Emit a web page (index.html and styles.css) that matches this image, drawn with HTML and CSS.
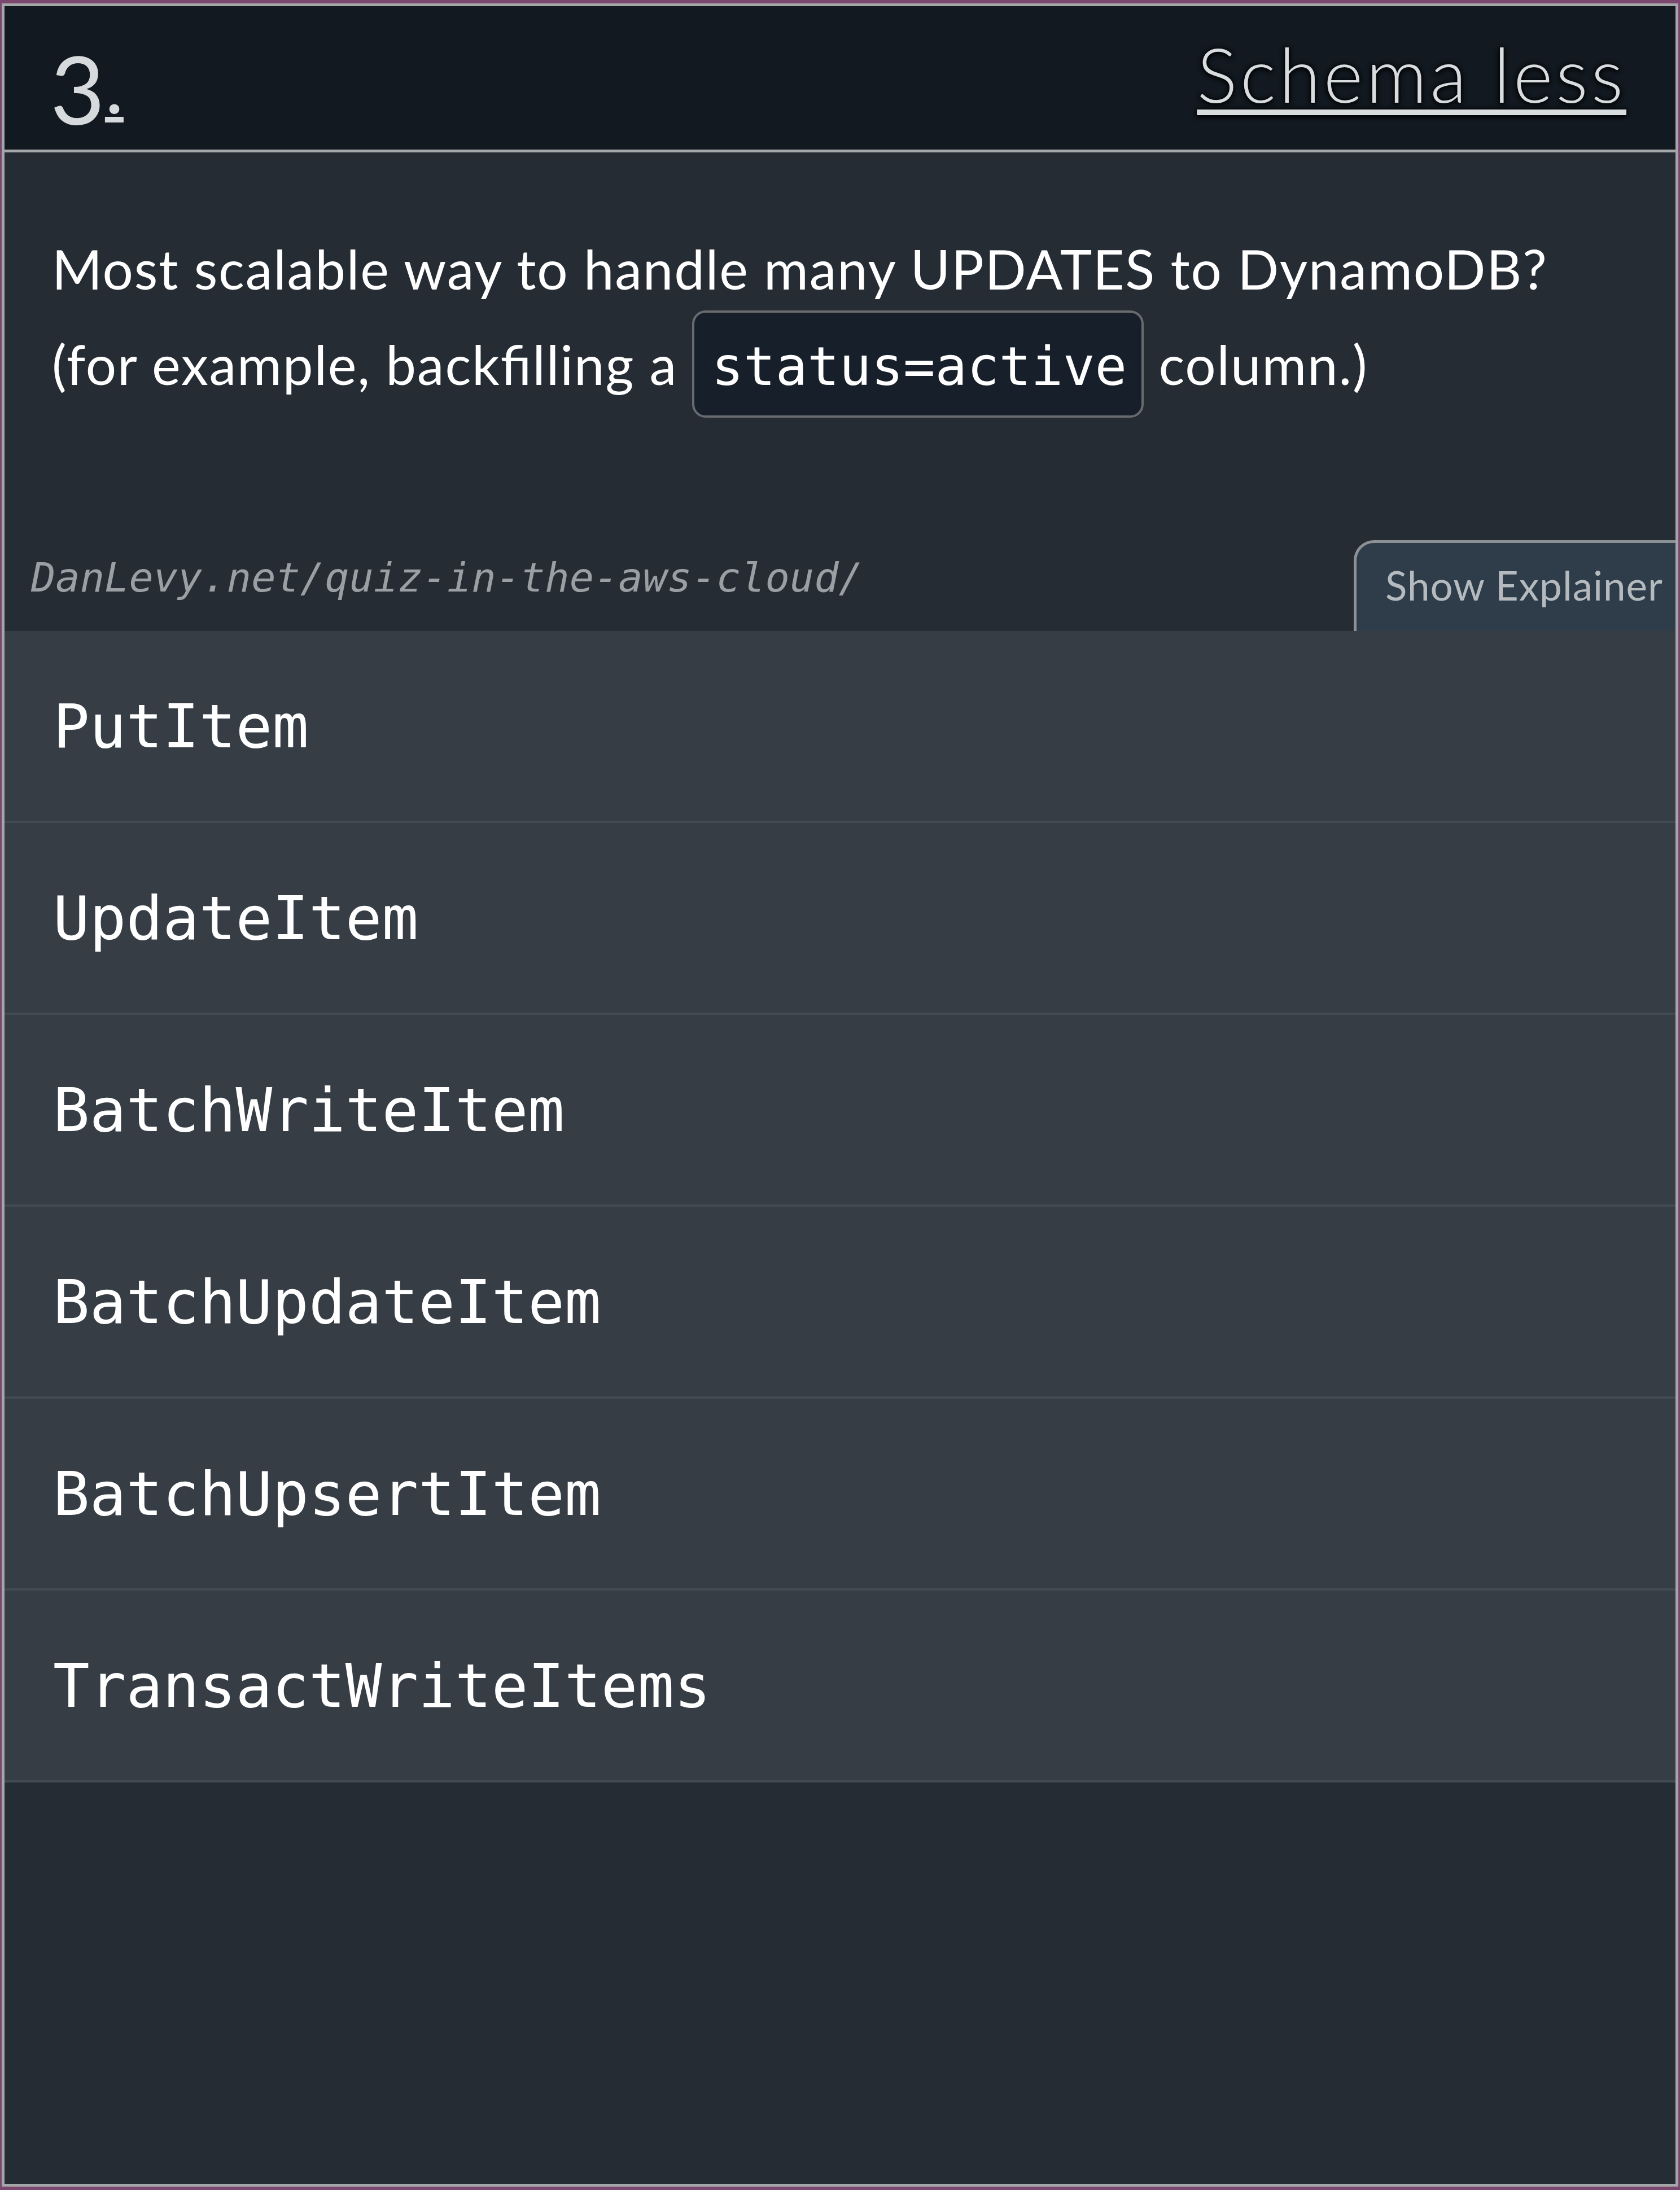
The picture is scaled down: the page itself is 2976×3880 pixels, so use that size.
FILE: index.html
```html
<!DOCTYPE html>
<html lang="en">
<head>
<meta charset="utf-8">
<title>Quiz 3 - Schema less</title>
<link rel="stylesheet" href="styles.css">
</head>
<body>
<div class="card">
  <header class="head">
    <h2 class="qnum">3<a class="qdot">.</a></h2>
    <a class="qtitle">Schema less</a>
  </header>
  <section class="question">
    <div class="qline">Most scalable way to handle many UPDATES to DynamoDB?</div>
    <div class="qline">(for example, back<span class="lig">fi</span>lling a <code class="code">status=active</code> column.)</div>
  </section>
  <div class="meta">
    <span class="url">DanLevy.net/quiz-in-the-aws-cloud/</span>
    <button class="explain">Show Explainer</button>
  </div>
  <ul class="options">
    <li class="option">PutItem</li>
    <li class="option">UpdateItem</li>
    <li class="option">BatchWriteItem</li>
    <li class="option">BatchUpdateItem</li>
    <li class="option">BatchUpsertItem</li>
    <li class="option">TransactWriteItems</li>
  </ul>
</div>
</body>
</html>
```

FILE: styles.css
```css
html, body {
  margin: 0;
  padding: 0;
  background: #7c476f;
}

.card {
  margin: 6px 3px;
  height: 3868px;
  box-sizing: border-box;
  border: 5px solid #a4a7a8;
  background: #262c33;
  overflow: hidden;
}

.head {
  height: 259px;
  box-sizing: border-box;
  border-bottom: 5px solid #a5a8a9;
  background: #121920;
  display: flex;
  justify-content: space-between;
  align-items: flex-start;
  padding: 0 87px 0 81px;
}

.qnum {
  margin: 53px 0 0;
  font: 400 167px/167px Lato, sans-serif;
  color: #d6dadc;
}

.qdot {
  font-size: 140px;
  vertical-align: 20px;
  text-decoration: underline;
  text-decoration-thickness: 10px;
  text-underline-offset: 6px;
}

.qtitle {
  margin-top: 53px;
  font: 300 134px/134px Lato, sans-serif;
  letter-spacing: 5.5px;
  color: #d8dcde;
  text-decoration: underline;
  text-decoration-thickness: 10px;
  text-underline-offset: 12px;
  text-shadow: 0 0 10px #000, 0 3px 8px rgba(0, 0, 0, 0.9);
}

.question {
  padding: 132px 0 0 84px;
  font: 400 96px Lato, sans-serif;
  letter-spacing: 1.8px;
  color: #ffffff;
}

.qline {
  line-height: 148px;
  white-space: nowrap;
}

.lig {
  letter-spacing: 0;
  margin-right: 1.8px;
}

.code {
  display: inline-block;
  font: 400 94px/112px "DejaVu Sans Mono", monospace;
  letter-spacing: 0;
  color: #ffffff;
  background: #17202a;
  border: 4px solid #686c70;
  border-radius: 24px;
  padding: 40px 26px 30px 30px;
  vertical-align: baseline;
}

.meta {
  display: flex;
  justify-content: space-between;
  align-items: flex-end;
  margin-top: 217px;
}

.url {
  font: italic 400 72px/84px "DejaVu Sans Mono", monospace;
  color: #9a9fa4;
  padding: 0 0 53px 47px;
}

.explain {
  width: 570px;
  box-sizing: border-box;
  margin: 0;
  border: 5px solid #8c9196;
  border-right: none;
  border-bottom: none;
  border-top-left-radius: 36px;
  background: #2f3d4a;
  color: #b5babf;
  font: 400 71px/85px Lato, sans-serif;
  letter-spacing: 1px;
  text-align: left;
  padding: 32px 0 39px 51px;
  white-space: nowrap;
}

.options {
  list-style: none;
  margin: 0;
  padding: 0;
}

.option {
  height: 336px;
  border-bottom: 4px solid #434a52;
  background: #363d45;
  display: flex;
  align-items: center;
  padding-left: 86px;
  font: 400 107.5px/125px "DejaVu Sans Mono", monospace;
  color: #ffffff;
}
```
